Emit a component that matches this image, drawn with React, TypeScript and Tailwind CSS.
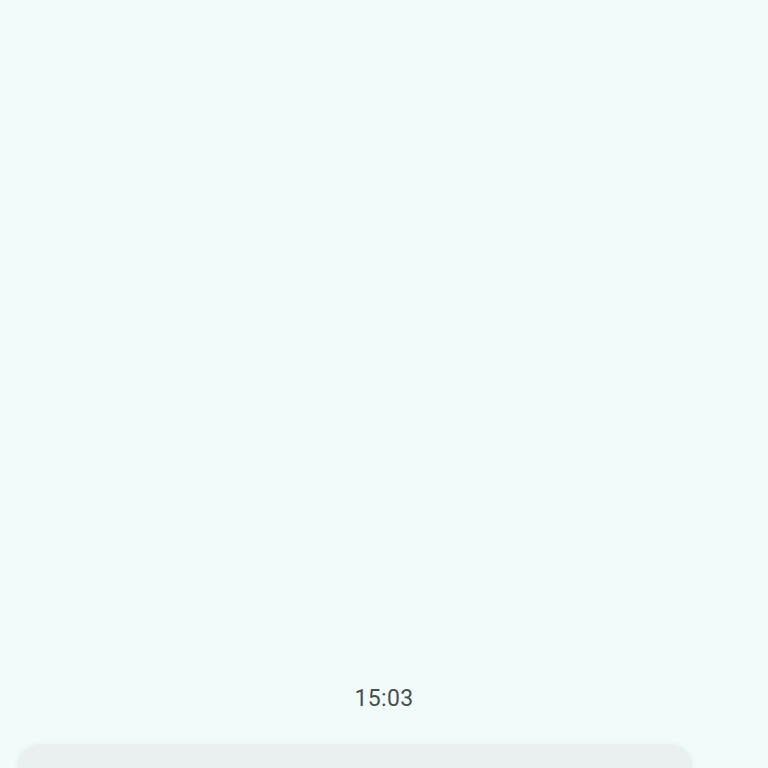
export default function App() {
  return (
    <div className="h-[768px] w-[768px] overflow-hidden bg-[#f1fbfa] flex flex-col" style={{ fontFamily: "Roboto, 'Noto Sans', sans-serif" }}>
      <div className="flex-1" />
      <div className="flex justify-center pb-[30px]">
        <span className="text-[23px] leading-[30px] text-[#485050] tracking-[0.3px]">15:03</span>
      </div>
      <div className="ml-[17px] w-[676px] h-[24px] rounded-t-[32px] bg-[#eaf0f0] shadow-[0_-1px_6px_rgba(0,0,0,0.04)] shrink-0" />
    </div>
  );
}
